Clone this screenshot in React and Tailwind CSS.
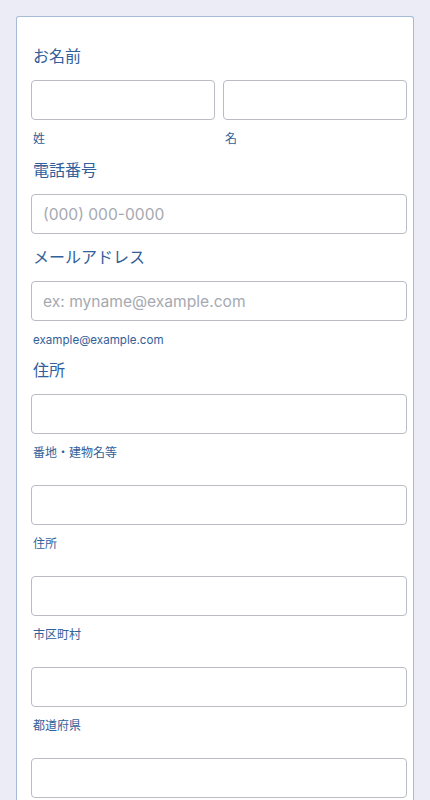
const font = { fontFamily: '"Inter", "Noto Sans CJK JP", sans-serif' };

function Input({ placeholder = '' }) {
  return (
    <input
      type="text"
      placeholder={placeholder}
      className="block w-full h-10 rounded-[4px] border border-[#b9bcc2] bg-white px-[11px] text-[15.6px] text-[#2c3345] placeholder:text-[#a6a9b1] outline-none"
    />
  );
}

function Label({ children, className = '' }) {
  return <div className={`pl-[2px] text-base leading-5 text-[#32609a] ${className}`}>{children}</div>;
}

function Sub({ children, className = '' }) {
  return <div className={`pl-[2px] text-xs leading-4 text-[#32609a] ${className}`}>{children}</div>;
}

export default function App() {
  const address = ['番地・建物名等', '住所', '市区町村', '都道府県', '郵便番号'];
  return (
    <div className="min-h-screen bg-[#ebecf5] pt-4 px-4" style={font}>
      <div className="w-[398px] rounded-t-[3px] border border-b-0 border-[#a7bbd8] bg-white pl-[14px] pr-[6px] pt-[29px] pb-10">
        <Label>お名前</Label>
        <div className="mt-[14px] grid grid-cols-2 gap-2">
          <div>
            <Input />
            <Sub className="mt-[11px]">姓</Sub>
          </div>
          <div>
            <Input />
            <Sub className="mt-[11px]">名</Sub>
          </div>
        </div>

        <Label className="mt-[13px]">電話番号</Label>
        <div className="mt-[14px]">
          <Input placeholder="(000) 000-0000" />
        </div>

        <Label className="mt-[13px]">メールアドレス</Label>
        <div className="mt-[14px]">
          <Input placeholder="ex: myname@example.com" />
        </div>
        <div className="mt-[11px] pl-[2px] text-[11.6px] leading-4 text-[#32609a]">example@example.com</div>

        <Label className="mt-[12px]">住所</Label>
        {address.map((s, i) => (
          <div key={s} className={i === 0 ? 'mt-[14px]' : 'mt-[24px]'}>
            <Input />
            <Sub className="mt-[11px]">{s}</Sub>
          </div>
        ))}
      </div>
    </div>
  );
}
